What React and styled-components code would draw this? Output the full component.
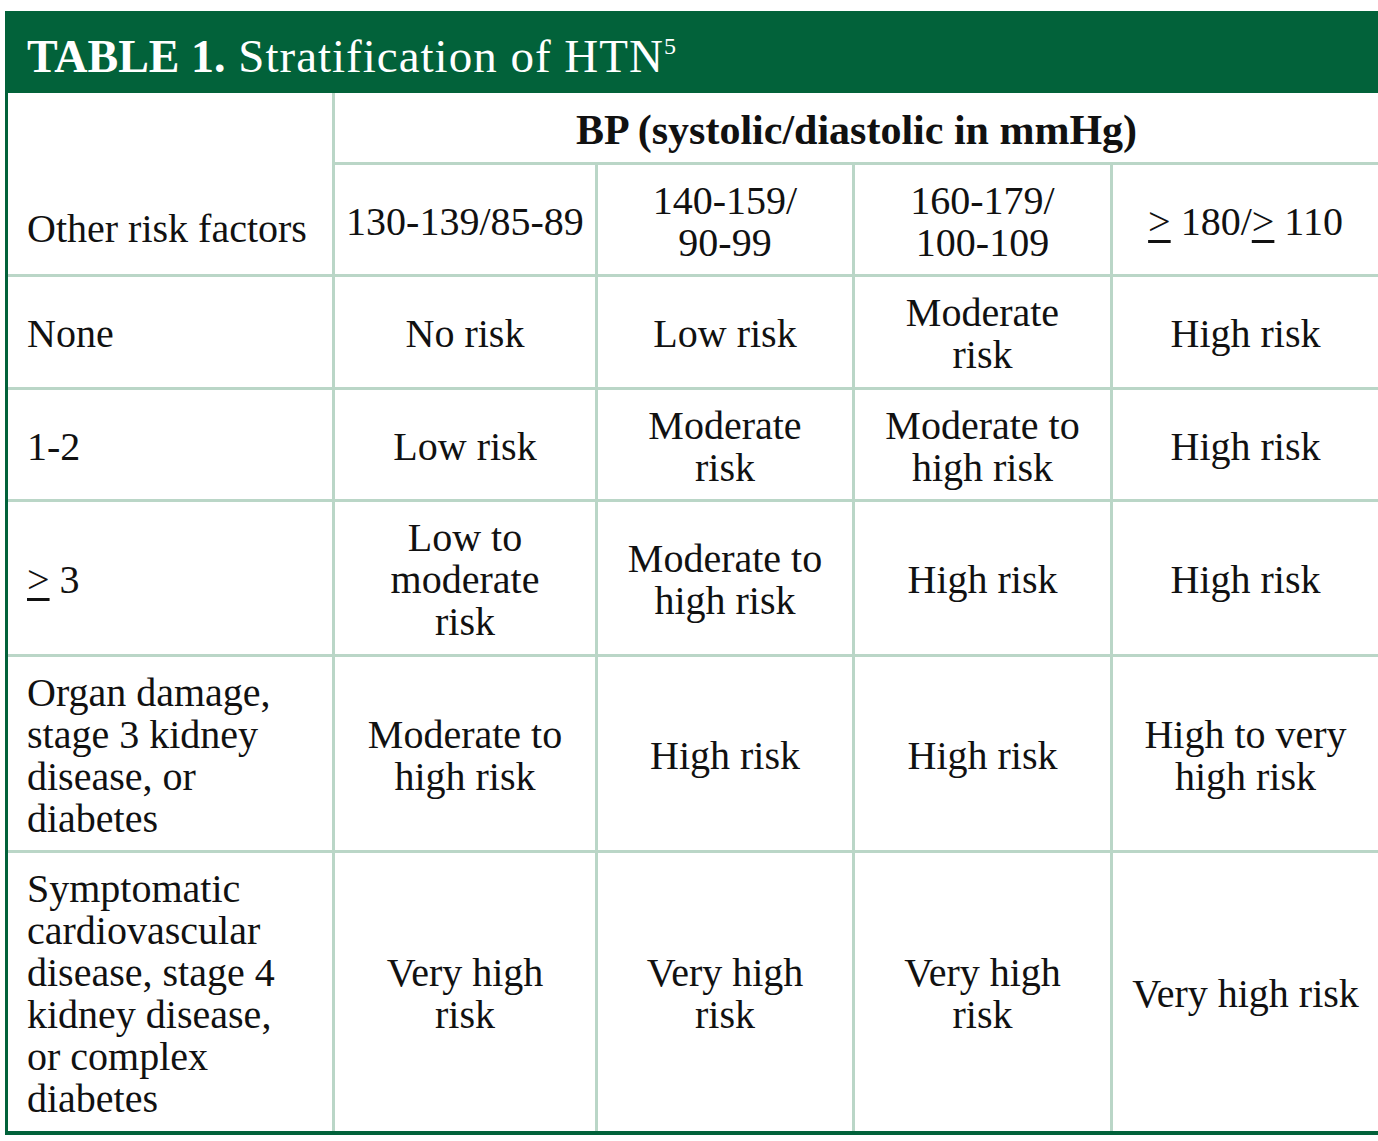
import React from "react";
import styled, { createGlobalStyle } from "styled-components";

const Global = createGlobalStyle`
  html, body { margin: 0; padding: 0; background: #fff; }
  body { font-family: "Liberation Serif", "Times New Roman", serif; color: #111; }
`;

const GREEN = "#02623a";
const LINE = "#bad6c7";

const Frame = styled.div`
  width: 1373px;
  margin: 11px 0 0 5px;
`;

const TitleBar = styled.div`
  height: 82px;
  box-sizing: border-box;
  background: ${GREEN};
  color: #fff;
  padding: 22px 0 0 22px;
  font-size: 47px;
  line-height: 46px;
  letter-spacing: 1px;
  white-space: nowrap;
`;

const TitleLabel = styled.b`
  font-weight: 700;
  font-size: 46px;
  letter-spacing: 0;
`;

const Sup = styled.sup`
  font-size: 24px;
  line-height: 0;
  vertical-align: 18px;
`;

const Grid = styled.div`
  display: grid;
  grid-template-columns: 324px 260px 254px 255px 265px;
  grid-template-rows: 69px 109px 110px 109px 152px 193px 278px;
  gap: 3px;
  background: ${LINE};
  border-left: 3px solid ${GREEN};
  border-bottom: 4px solid ${GREEN};
`;

const Cell = styled.div`
  background: #fff;
  display: flex;
  flex-direction: column;
  justify-content: ${(p) => (p.$bottom ? "flex-end" : "center")};
  align-items: ${(p) => (p.$left ? "flex-start" : "center")};
  text-align: ${(p) => (p.$left ? "left" : "center")};
  padding: ${(p) =>
    p.$bottom ? "0 0 24px 19px" : p.$left ? "4px 0 0 19px" : "4px 0 0 0"};
  grid-column: ${(p) => p.$span || "auto"};
  grid-row: ${(p) => p.$rows || "auto"};
  font-size: ${(p) => (p.$bold ? "42px" : "40px")};
  line-height: 42px;
  font-weight: ${(p) => (p.$bold ? 700 : 400)};
  white-space: nowrap;
  color: #111;
`;

const Ge = styled.span`
  text-decoration: underline;
  text-decoration-thickness: 3px;
  text-underline-offset: 5px;
`;

const Lines = ({ lines }) =>
  lines.map((l, i) => (
    <React.Fragment key={i}>
      {i > 0 && <br />}
      {l}
    </React.Fragment>
  ));

const geq = (rest) => (
  <>
    <Ge>&gt;</Ge>
    {rest}
  </>
);

const rows = [
  { head: ["None"], cells: [["No risk"], ["Low risk"], ["Moderate", "risk"], ["High risk"]] },
  { head: ["1-2"], cells: [["Low risk"], ["Moderate", "risk"], ["Moderate to", "high risk"], ["High risk"]] },
  { head: [geq(" 3")], cells: [["Low to", "moderate", "risk"], ["Moderate to", "high risk"], ["High risk"], ["High risk"]] },
  {
    head: ["Organ damage,", "stage 3 kidney", "disease, or", "diabetes"],
    cells: [["Moderate to", "high risk"], ["High risk"], ["High risk"], ["High to very", "high risk"]],
  },
  {
    head: ["Symptomatic", "cardiovascular", "disease, stage 4", "kidney disease,", "or complex", "diabetes"],
    cells: [["Very high", "risk"], ["Very high", "risk"], ["Very high", "risk"], ["Very high risk"]],
  },
];

export default function App() {
  return (
    <>
      <Global />
      <Frame>
        <TitleBar>
          <TitleLabel>TABLE 1.</TitleLabel> Stratification of HTN<Sup>5</Sup>
        </TitleBar>
        <Grid>
          <Cell $left $bottom $rows="1 / 3">Other risk factors</Cell>
          <Cell $bold $span="2 / 6">BP (systolic/diastolic in mmHg)</Cell>
          <Cell>130-139/85-89</Cell>
          <Cell><Lines lines={["140-159/", "90-99"]} /></Cell>
          <Cell><Lines lines={["160-179/", "100-109"]} /></Cell>
          <Cell>
            <span>
              <Ge>&gt;</Ge> 180/<Ge>&gt;</Ge> 110
            </span>
          </Cell>
          {rows.map((r, ri) => (
            <React.Fragment key={ri}>
              <Cell $left><div><Lines lines={r.head} /></div></Cell>
              {r.cells.map((c, ci) => (
                <Cell key={ci}><div><Lines lines={c} /></div></Cell>
              ))}
            </React.Fragment>
          ))}
        </Grid>
      </Frame>
    </>
  );
}
